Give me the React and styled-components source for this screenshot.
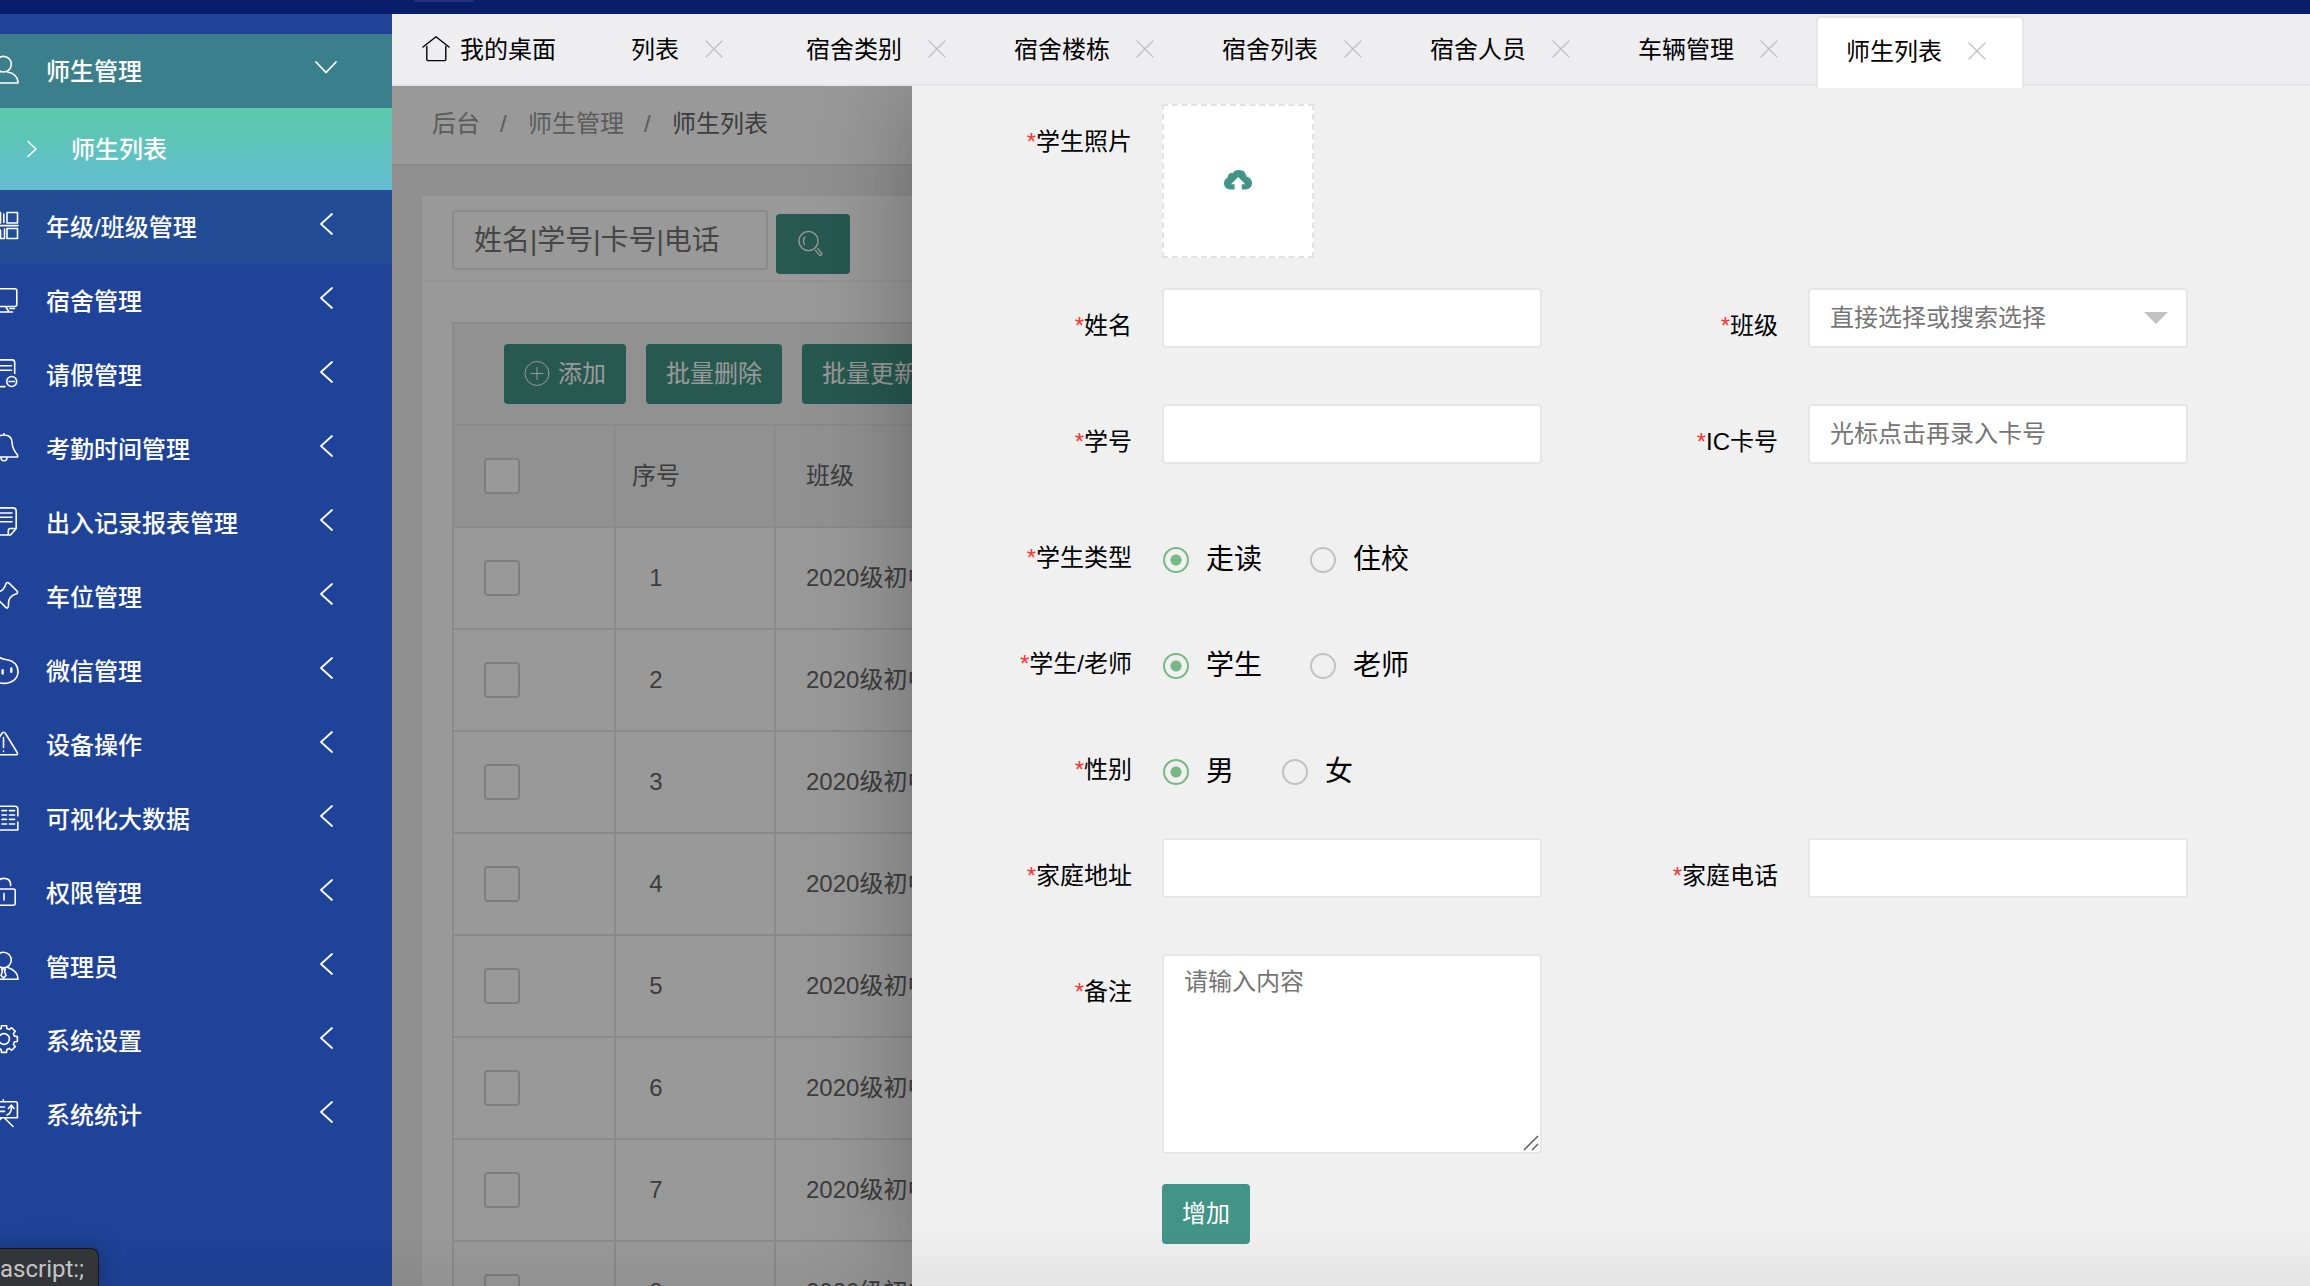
import React, { useState } from "react";
import styled, { createGlobalStyle, css } from "styled-components";

const GlobalStyle = createGlobalStyle`
  * {
    box-sizing: border-box;
  }
  body {
    margin: 0;
    font-family: "Liberation Sans", "Noto Sans CJK SC", sans-serif;
    font-size: 24px;
    line-height: 36px;
    color: #000;
  }
  button, input, select, textarea {
    font: inherit;
    color: inherit;
    margin: 0;
  }
  a {
    color: inherit;
    text-decoration: none;
  }
`;

const Page = styled.div`
  height: 100vh;
  display: flex;
  flex-direction: column;
  overflow: hidden;
  position: relative;
`;

const TopBar = styled.header`
  flex: none;
  height: 14px;
  padding-left: 414px;
  background: #081e6b;
`;

const TopMark = styled.div`
  width: 60px;
  height: 2px;
  background: #23337c;
  border-radius: 0 0 4px 4px;
`;

const Main = styled.div`
  flex: 1;
  min-height: 0;
  display: flex;
`;

/* ---------- sidebar ---------- */

const Sidebar = styled.nav`
  flex: none;
  width: 392px;
  padding-top: 20px;
  background: #1e4398;
  color: #fff;
  overflow: hidden;
`;

const NavLink = styled.a`
  display: flex;
  align-items: center;
  height: 74px;
  gap: 26px;
  margin-left: -12px;
  padding-right: 54px;
  background: ${(props) =>
    props.$open ? "#3b7f8c" : props.$hover ? "#224c96" : "transparent"};
`;

const NavText = styled.span`
  flex: 1;
  padding-top: 2px;
  font-weight: 500;
`;

const SubLink = styled.a`
  display: flex;
  align-items: center;
  height: 82px;
  gap: 33px;
  padding-left: 26px;
  background: linear-gradient(#5ac9a8, #64bdd4);
`;

const LineIcon = styled.svg`
  flex: none;
  display: block;
  fill: none;
  stroke: currentColor;
  stroke-width: ${(props) => props.$weight || 1.6};
  stroke-linecap: round;
  stroke-linejoin: round;
`;

// 齿轮外轮廓
const gearPath = () => {
  const pts = [];
  for (let i = 0; i < 8; i++) {
    const a = (i * Math.PI) / 4;
    [
      [-0.27, 10.8],
      [-0.19, 13.6],
      [0.19, 13.6],
      [0.27, 10.8],
    ].forEach(([d, r]) => {
      const x = 16 + r * Math.sin(a + d);
      const y = 14 - r * Math.cos(a + d);
      pts.push(`${x.toFixed(2)} ${y.toFixed(2)}`);
    });
  }
  return `M${pts.join("L")}Z`;
};

const icons = {
  user: (
    <>
      <circle cx="15.5" cy="9.2" r="7.8" />
      <path d="M12 17C6 18.5 1.5 22 1.5 28H30C30 22 25.5 18 19.5 17" />
    </>
  ),
  grid: (
    <>
      <rect x="2" y="1.5" width="10.5" height="10.5" />
      <rect x="19" y="1.5" width="10.5" height="10.5" />
      <rect x="19" y="17.5" width="10.5" height="10" />
      <path d="M15.8 3V11.5M2 14.6H30M3 18V27.5M8 21V27.5M12.5 19V27.5M16.5 18V27.5M2 27.5H16.5" />
    </>
  ),
  monitor: (
    <>
      <rect x="1.5" y="3.7" width="27.3" height="17.8" rx="2" />
      <path d="M11 21.5L9.5 27M18 22L21 27M6 27H24.5M22 23.5H26.5" />
    </>
  ),
  leave: (
    <>
      <path d="M26.7 14.5V3.5Q26.7 0.9 24 0.9H5Q2 0.9 2 3.5V25Q2 27.6 5 27.6H17" />
      <path d="M7 6.8H23.5M7 11.2H23.5" />
      <circle cx="23.7" cy="22.5" r="5" />
      <path d="M21 22.5H26.4" />
    </>
  ),
  bell: (
    <path d="M16 0.7V2M2.2 23.2C6 18 7.6 15 7.6 9.5C8 4.5 11.5 2 16 2C20.5 2 23.8 4.5 24.1 9.5C24.3 15 26 18 29.6 22V24H2.2ZM13 24.2C13 29 19 29 19 24.2" />
  ),
  report: (
    <>
      <path d="M28.2 20.5V4Q28.2 0.9 25 0.9H5Q2 0.9 2 4V25Q2 28 5 28H22.5L28.2 21.5H22.5Q20.3 21.5 20.3 24V28" />
      <path d="M7 6H24M7 10.3H24M7 14.8H24" />
    </>
  ),
  pin: (
    <path d="M18.2 2.3Q19.5 0.8 21 2.2L29 10Q30.3 11.6 28.5 12.8Q24 14 21.8 17.2Q20.2 20 20.5 24.5Q20 28.2 17.8 26.3L4.5 13.5Q3.4 11.5 5.5 11.3Q12 11.6 15 8.4Q17.2 5.6 18.2 2.3ZM10.8 19.6L2.5 28" />
  ),
  wechat: (
    <>
      <path d="M11 2.2C14.5 4.2 16 4.6 19 4.8C25.5 5.6 30 10 30 16.4C30 23.6 24 28.4 16 28.4C8 28.4 2 23.6 2 16.4C2 9.5 6 4.5 11 2.2Z" />
      <path d="M14.6 15.2V18.6M23.3 13.4V16.8" strokeWidth="2.4" />
    </>
  ),
  warn: (
    <>
      <path d="M15.6 3.2Q16.8 3.2 17.8 5L29.2 23.5Q30 25.8 28.4 25.8H3Q1.3 25.8 2.1 23.5L13.4 5Q14.4 3.2 15.6 3.2Z" />
      <path d="M15.5 8.5V18.5M15.5 22V22.4" />
    </>
  ),
  data: (
    <>
      <path d="M29.8 13V6Q29.8 3.2 27 3.2H5Q2 3.2 2 6V27H29.8V19" />
      <path d="M5.5 7.6H10.5M14 7.6H18.6M21.4 7.6H26.6M5.5 12H10.5M14 12H18.6M21.4 12H26.6M5.5 16.4H10.5M14 16.4H18.6M21.4 16.4H26.6M5.5 21H10.5M14 21H18.6M21.4 21H26.6" />
    </>
  ),
  lock: (
    <>
      <rect x="4" y="12" width="23.2" height="16.2" rx="1.6" />
      <path d="M9 12V8Q9.5 1.4 16 1.4Q22 1.4 22.6 7V8.6M16 16.5V23" />
    </>
  ),
  admin: (
    <>
      <circle cx="15.5" cy="9" r="7.8" />
      <path d="M11 16.5C5.5 18.5 1.5 22 1.5 28.2H30C30 22 25.5 18.5 20 16.5" />
      <path d="M13.6 18H17.4L16.6 20.5L18 24.5L15.5 27L13 24.5L14.4 20.5Z" />
    </>
  ),
  gear: (
    <>
      <path d={gearPath()} />
      <circle cx="16" cy="14" r="5.4" />
    </>
  ),
  stats: (
    <>
      <path d="M15.2 0.8V2.8M2 2.8H27.5Q29.4 2.8 29.4 5V18.8H2ZM13.5 19L5.5 27.5M16.5 19L25 27.5" />
      <path d="M8 8H16.5M8 12.4H16.5M19 16Q24 14 23.4 6.5M20.4 9.5L23.4 6L26 9.5" />
    </>
  ),
};

const MENU = [
  { icon: "user", text: "师生管理", sub: ["师生列表"] },
  { icon: "grid", text: "年级/班级管理", hover: true },
  { icon: "monitor", text: "宿舍管理" },
  { icon: "leave", text: "请假管理" },
  { icon: "bell", text: "考勤时间管理" },
  { icon: "report", text: "出入记录报表管理" },
  { icon: "pin", text: "车位管理" },
  { icon: "wechat", text: "微信管理" },
  { icon: "warn", text: "设备操作" },
  { icon: "data", text: "可视化大数据" },
  { icon: "lock", text: "权限管理" },
  { icon: "admin", text: "管理员" },
  { icon: "gear", text: "系统设置" },
  { icon: "stats", text: "系统统计" },
];

const MenuArrow = ({ open }) => (
  <LineIcon width="24" height="32" viewBox="0 0 24 32" $weight={1.8}>
    <path d={open ? "M2 7L12 17.5L22 7" : "M18 3L7 13L18 23"} />
  </LineIcon>
);

const SideMenu = () => (
  <Sidebar>
    {MENU.map((item) => (
      <React.Fragment key={item.text}>
        <NavLink href="#" $open={!!item.sub} $hover={item.hover}>
          <LineIcon width="32" height="32" viewBox="0 0 32 32">
            {icons[item.icon]}
          </LineIcon>
          <NavText>{item.text}</NavText>
          <MenuArrow open={!!item.sub} />
        </NavLink>
        {item.sub &&
          item.sub.map((text) => (
            <SubLink href="#" key={text}>
              <LineIcon width="12" height="18" viewBox="0 0 12 18">
                <path d="M2 1.5L10 9L2 16.5" />
              </LineIcon>
              <NavText>{text}</NavText>
            </SubLink>
          ))}
      </React.Fragment>
    ))}
  </Sidebar>
);

/* ---------- tabs ---------- */

const Content = styled.div`
  flex: 1;
  min-width: 0;
  display: flex;
  flex-direction: column;
`;

const TabBar = styled.div`
  flex: none;
  display: flex;
  height: 72px;
  padding-top: 2px;
  background: #eeeef1;
  border-bottom: 2px solid #e4e5e7;
  position: relative;
  z-index: 2;
`;

const Tab = styled.div`
  flex: none;
  display: flex;
  align-items: center;
  justify-content: center;
  height: 72px;
  min-width: 190px;
  padding: 0 38px 4px 30px;
  gap: 26px;
  ${(props) =>
    props.$home &&
    css`
      padding-right: 30px;
    `}
  ${(props) =>
    props.$active &&
    css`
      padding: 0 36px 2px 28px;
      background: #fff;
      border: 2px solid #e6e6e6;
      border-bottom: 0;
      border-radius: 4px 4px 0 0;
    `}
`;

const TabLink = styled.a`
  display: flex;
  align-items: center;
  gap: 10px;
`;

const IconButton = styled.button`
  display: flex;
  padding: 0;
  border: 0;
  background: none;
  color: #c2c2c2;
`;

const TABS = ["列表", "宿舍类别", "宿舍楼栋", "宿舍列表", "宿舍人员", "车辆管理", "师生列表"];

const Tabs = () => (
  <TabBar>
    <Tab $home>
      <TabLink href="#">
        <LineIcon width="28" height="28" viewBox="0 0 28 28" $weight={1.4}>
          <path d="M1 11L14 0.8L27 11M4.8 10.5V23.5Q4.8 24.6 6 24.6H22.6Q23.8 24.6 23.8 23.5V10.5" />
        </LineIcon>
        我的桌面
      </TabLink>
    </Tab>
    {TABS.map((text) => (
      <Tab key={text} $active={text === "师生列表"}>
        <TabLink href="#">{text}</TabLink>
        <IconButton type="button" aria-label={`关闭${text}`}>
          <LineIcon width="18" height="20" viewBox="0 0 18 20" $weight={1.4}>
            <path d="M1 1L17 17M17 1L1 17" />
          </LineIcon>
        </IconButton>
      </Tab>
    ))}
  </TabBar>
);

/* ---------- list page behind the drawer ---------- */

const Frame = styled.div`
  flex: 1;
  min-height: 0;
  position: relative;
  overflow: hidden;
  background: #f1f1f1;
`;

const Crumbs = styled.div`
  display: flex;
  align-items: center;
  gap: 20px;
  height: 80px;
  padding: 0 40px 2px;
  background: #fff;
  border-bottom: 2px solid #e6e6e6;
  color: #999;
`;

const Slash = styled.span`
  width: 8px;
`;

const CrumbCurrent = styled.span`
  color: #666;
`;

const Card = styled.div`
  margin: 30px 30px 0;
  background: #fff;
  border-radius: 4px;
  box-shadow: 0 2px 4px rgba(0, 0, 0, 0.05);
`;

const SearchRow = styled.form`
  display: flex;
  gap: 8px;
  height: 86px;
  padding: 14px 30px 0;
  border-bottom: 2px solid #f6f6f6;
`;

const fieldBox = css`
  width: 100%;
  height: 60px;
  padding: 0 20px;
  background: #fff;
  border: 2px solid #e6e6e6;
  border-radius: 4px;
  outline: none;
  &::placeholder {
    color: #757575;
    opacity: 1;
  }
`;

const Input = styled.input`
  ${fieldBox}
`;

const SearchInput = styled(Input)`
  width: 316px;
  padding-top: 2px;
  font-size: 28px;
`;

const Button = styled.button`
  display: flex;
  align-items: center;
  justify-content: center;
  gap: 8px;
  height: 60px;
  padding: 0 20px;
  border: 0;
  border-radius: 4px;
  background: #429487;
  color: #fff;
  white-space: nowrap;
`;

const SearchButton = styled(Button)`
  width: 74px;
  margin-top: 4px;
`;

const TableBox = styled.div`
  margin: 40px 30px 0;
  border: 2px solid #e6e6e6;
`;

const ToolRow = styled.div`
  display: flex;
  gap: 20px;
  height: 102px;
  padding: 20px 50px;
  background: #f2f2f2;
  border-bottom: 2px solid #e6e6e6;
`;

const Table = styled.table`
  width: 100%;
  table-layout: fixed;
  border-collapse: separate;
  border-spacing: 0;
  color: #666;
`;

const cell = css`
  height: 102px;
  padding: 0 30px;
  border-right: 2px solid #e6e6e6;
  border-bottom: 2px solid #e6e6e6;
  text-align: left;
  font-weight: 400;
  white-space: nowrap;
  overflow: hidden;
`;

const Th = styled.th`
  ${cell}
  background: #f2f2f2;
  width: ${(props) => props.$width || "auto"};
`;

const Td = styled.td`
  ${cell}
`;

const Num = styled.div`
  width: 80px;
  margin-left: -30px;
  text-align: center;
`;

const Check = styled.input`
  appearance: none;
  display: block;
  width: 36px;
  height: 36px;
  background: #fff;
  border: 2px solid #d2d2d2;
  border-radius: 4px;
`;

const Shade = styled.div`
  position: absolute;
  inset: 0;
  background: rgba(0, 0, 0, 0.4);
`;

const ListPage = () => (
  <>
    <Crumbs>
      <a href="#">后台</a>
      <Slash>/</Slash>
      <a href="#">师生管理</a>
      <Slash>/</Slash>
      <CrumbCurrent>师生列表</CrumbCurrent>
    </Crumbs>
    <Card>
      <SearchRow>
        <SearchInput aria-label="搜索" placeholder="姓名|学号|卡号|电话" />
        <SearchButton type="button" aria-label="搜索">
          <LineIcon width="30" height="28" viewBox="0 0 30 28" $weight={1.4}>
            <circle cx="10.5" cy="11" r="9.6" />
            <path d="M6.4 14.5Q4.2 10.5 7 7M17.4 20.4L21.4 25Q24 26 23.8 23.2L19.6 18.6" />
          </LineIcon>
        </SearchButton>
      </SearchRow>
      <TableBox>
        <ToolRow>
          <Button type="button">
            <LineIcon width="26" height="26" viewBox="0 0 26 26" $weight={1}>
              <circle cx="13" cy="12.5" r="12" />
              <path d="M7 12.5H19M13 6.5V18.5" />
            </LineIcon>
            添加
          </Button>
          <Button type="button">批量删除</Button>
          <Button type="button">批量更新</Button>
        </ToolRow>
        <Table>
          <thead>
            <tr>
              <Th $width="162px">
                <Check type="checkbox" aria-label="全选" />
              </Th>
              <Th $width="160px">
                <Num>序号</Num>
              </Th>
              <Th>班级</Th>
            </tr>
          </thead>
          <tbody>
            {[1, 2, 3, 4, 5, 6, 7, 8].map((n) => (
              <tr key={n}>
                <Td>
                  <Check type="checkbox" aria-label={`选择${n}`} />
                </Td>
                <Td>
                  <Num>{n}</Num>
                </Td>
                <Td>2020级初中</Td>
              </tr>
            ))}
          </tbody>
        </Table>
      </TableBox>
    </Card>
  </>
);

/* ---------- drawer form ---------- */

const Drawer = styled.form`
  position: absolute;
  top: 0;
  right: 0;
  bottom: 0;
  left: 520px;
  padding: 18px 122px 0 0;
  display: flex;
  flex-direction: column;
  gap: 30px;
  background: #f0f0f1;
  box-shadow: 2px 2px 100px rgba(0, 0, 0, 0.3);
`;

const Row = styled.div`
  flex: none;
  display: grid;
  grid-template-columns: 250px 1fr 266px 1fr;
  align-items: start;
  min-height: ${(props) => props.$height || 86}px;
`;

const Label = styled.label`
  padding-right: 30px;
  line-height: 76px;
  text-align: right;
`;

const Star = styled.span`
  color: #f33;
`;

const Upload = styled.button`
  display: flex;
  align-items: center;
  justify-content: center;
  width: 152px;
  height: 154px;
  padding: 0 0 2px;
  background: #fff;
  border: 2px dashed #e2e2e2;
  color: #429487;
`;

const FieldWrap = styled.div`
  position: relative;
`;

const Select = styled.select`
  ${fieldBox}
  appearance: none;
  color: #757575;
`;

const Caret = styled.svg`
  position: absolute;
  top: 24px;
  right: 20px;
  fill: #c2c2c2;
  pointer-events: none;
`;

const Textarea = styled.textarea`
  ${fieldBox}
  display: block;
  height: 200px;
  padding: 8px 20px;
  resize: vertical;
  &::-webkit-resizer {
    display: none;
  }
`;

const Grip = styled.svg`
  position: absolute;
  right: 3px;
  bottom: 3px;
  stroke: #555;
  stroke-width: 1.4;
  pointer-events: none;
`;

const RadioGroup = styled.div`
  display: flex;
  gap: 48px;
  padding: 26px 0 0 1px;
`;

const RadioLabel = styled.label`
  display: flex;
  align-items: center;
  gap: 17px;
  font-size: 28px;
  line-height: 28px;
  white-space: nowrap;
`;

const Radio = styled.input`
  appearance: none;
  width: 26px;
  height: 26px;
  border: 2px solid #c2c2c2;
  border-radius: 50%;
  &:checked {
    border-color: #78b885;
    background: radial-gradient(circle, #78b885 5px, transparent 6px);
  }
`;

const Actions = styled.div`
  display: flex;
  padding-left: 250px;
`;

const FieldLabel = ({ id, children }) => (
  <Label htmlFor={id}>
    <Star>*</Star>
    {children}
  </Label>
);

const RadioRow = ({ name, label, options }) => {
  const [value, setValue] = useState(options[0]);
  return (
    <Row $height={76}>
      <FieldLabel id={`${name}-0`}>{label}</FieldLabel>
      <RadioGroup>
        {options.map((text, i) => (
          <RadioLabel key={text}>
            <Radio
              type="radio"
              id={`${name}-${i}`}
              name={name}
              checked={value === text}
              onChange={() => setValue(text)}
            />
            {text}
          </RadioLabel>
        ))}
      </RadioGroup>
    </Row>
  );
};

const StudentForm = () => (
  <Drawer>
    <Row>
      <FieldLabel id="photo">学生照片</FieldLabel>
      <Upload type="button" id="photo" aria-label="上传照片">
        <svg width="28" height="20" viewBox="0 0 28 20" fill="currentColor">
          <path d="M7 19.4C2.8 19.4 0 16.8 0 13.4C0 10.6 1.6 8.6 3.8 7.6C3.6 4.6 6 2.6 8.6 3.2C10 1 12 0 15 0C19.4 0 22 2.8 22.4 6.4C25.8 7.2 28 9.8 28 13C28 16.8 25.2 19.4 21.4 19.4H17.8V14.2H21.4L14.2 7L7 14.2H10.6V19.4Z" />
        </svg>
      </Upload>
    </Row>
    <Row>
      <FieldLabel id="name">姓名</FieldLabel>
      <Input id="name" />
      <FieldLabel id="grade">班级</FieldLabel>
      <FieldWrap>
        <Select id="grade">
          <option>直接选择或搜索选择</option>
        </Select>
        <Caret width="24" height="12" viewBox="0 0 24 12">
          <path d="M0 0H24L12 12Z" />
        </Caret>
      </FieldWrap>
    </Row>
    <Row>
      <FieldLabel id="number">学号</FieldLabel>
      <Input id="number" />
      <FieldLabel id="card">IC卡号</FieldLabel>
      <Input id="card" placeholder="光标点击再录入卡号" />
    </Row>
    <RadioRow name="type" label="学生类型" options={["走读", "住校"]} />
    <RadioRow name="role" label="学生/老师" options={["学生", "老师"]} />
    <RadioRow name="sex" label="性别" options={["男", "女"]} />
    <Row>
      <FieldLabel id="address">家庭地址</FieldLabel>
      <Input id="address" />
      <FieldLabel id="phone">家庭电话</FieldLabel>
      <Input id="phone" />
    </Row>
    <Row>
      <FieldLabel id="remark">备注</FieldLabel>
      <FieldWrap>
        <Textarea id="remark" placeholder="请输入内容" />
        <Grip width="16" height="16" viewBox="0 0 16 16">
          <path d="M1 15L15 1M9 15L15 9" />
        </Grip>
      </FieldWrap>
    </Row>
    <Actions>
      <Button type="button">增加</Button>
    </Actions>
  </Drawer>
);

/* ---------- page edge ---------- */

const BottomFade = styled.div`
  position: absolute;
  left: 0;
  right: 0;
  bottom: 0;
  height: 56px;
  z-index: 3;
  pointer-events: none;
  background: linear-gradient(transparent, rgba(0, 0, 0, 0.05));
`;

const StatusBubble = styled.div`
  position: absolute;
  left: 0;
  bottom: 0;
  z-index: 4;
  height: 38px;
  padding: 2px 14px 0 0;
  background: #333538;
  border: 1px solid #14161c;
  border-width: 1px 1px 0 0;
  border-radius: 0 8px 0 0;
  box-shadow: 0 0 24px rgba(0, 0, 0, 0.25);
  color: #c4c5c7;
  font-family: Roboto, sans-serif;
`;

const App = () => {
  return (
    <Page>
      <GlobalStyle />
      <TopBar>
        <TopMark />
      </TopBar>
      <Main>
        <SideMenu />
        <Content>
          <Tabs />
          <Frame>
            <ListPage />
            <Shade />
            <StudentForm />
          </Frame>
        </Content>
      </Main>
      <BottomFade />
      <StatusBubble>ascript:;</StatusBubble>
    </Page>
  );
};

export default App;
